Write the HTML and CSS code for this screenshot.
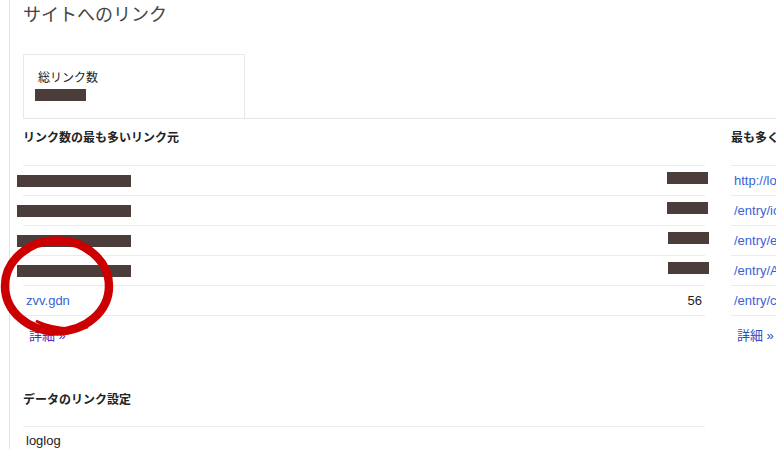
FILE: index.html
```html
<!DOCTYPE html>
<html lang="ja">
<head>
    <meta charset="UTF-8">
    <meta name="viewport" content="width=device-width, initial-scale=1.0">
    <title>サイトへのリンク</title>
    <link rel="stylesheet" href="styles.css">
</head>
<body>
    <div class="page">
        <h1 class="title">サイトへのリンク</h1>

        <div class="summary">
            <div class="stat-card">
                <div class="stat-label">総リンク数</div>
                <div class="stat-value"><span class="redact redact-total"></span></div>
            </div>
        </div>

        <div class="columns">
            <section class="panel panel-main">
                <h2 class="panel-title">リンク数の最も多いリンク元</h2>
                <div class="rows">
                    <div class="row">
                        <span class="redact redact-name"></span>
                        <span class="redact redact-count"></span>
                    </div>
                    <div class="row">
                        <span class="redact redact-name"></span>
                        <span class="redact redact-count"></span>
                    </div>
                    <div class="row">
                        <span class="redact redact-name"></span>
                        <span class="redact redact-count shift"></span>
                    </div>
                    <div class="row">
                        <span class="redact redact-name"></span>
                        <span class="redact redact-count shift"></span>
                    </div>
                    <div class="row">
                        <a href="#" class="row-link">zvv.gdn</a>
                        <span class="row-count">56</span>
                    </div>
                </div>
                <a href="#" class="more visited">詳細 &raquo;</a>

                <h2 class="panel-title sub">データのリンク設定</h2>
                <div class="rows plain">
                    <div class="row">loglog</div>
                </div>
            </section>

            <section class="panel panel-side">
                <h2 class="panel-title">最も多くリンクされているコンテンツ</h2>
                <div class="rows">
                    <div class="row"><a href="#" class="row-link">http://loglog.xsrv.jp/</a></div>
                    <div class="row"><a href="#" class="row-link">/entry/icon-font/</a></div>
                    <div class="row"><a href="#" class="row-link">/entry/excel-macro/</a></div>
                    <div class="row"><a href="#" class="row-link">/entry/AdSense/</a></div>
                    <div class="row"><a href="#" class="row-link">/entry/css-grid/</a></div>
                </div>
                <a href="#" class="more">詳細 &raquo;</a>
            </section>
        </div>
    </div>

    <!-- hand drawn marker over the zvv.gdn row -->
    <svg class="mark" width="122" height="115" viewBox="0 0 122 115">
        <ellipse cx="57" cy="58" rx="52" ry="45.5" fill="none" stroke="#cc0000" stroke-width="8.5"/>
        <path d="M36 93 Q58 108 88 99 Q60 104 36 93 Z" fill="#cc0000" stroke="#cc0000" stroke-width="2.5"/>
    </svg>
</body>
</html>
```

FILE: styles.css
```css
html, body {
    overflow: hidden;
}
body {
    margin: 0;
    font-family: "Liberation Sans", "Noto Sans CJK JP", sans-serif;
    font-size: 13px;
    color: #222;
    background: #fff;
    position: relative;
    height: 449px;
}
a {
    color: #3b5fd6;
    text-decoration: none;
}
.page {
    margin-left: 9px;
    border-left: 1px solid #e5e5e5;
    padding-left: 13px;
    height: 449px;
    width: 1200px;
}
.title {
    margin: 0 0 26px;
    padding-top: 2px;
    font-size: 18px;
    line-height: 26px;
    font-weight: normal;
    color: #444;
}
.summary {
    border-bottom: 1px solid #e5e5e5;
}
.stat-card {
    box-sizing: border-box;
    width: 222px;
    height: 64px;
    border: 1px solid #e8e8e8;
    border-bottom: none;
    padding: 15px 0 0 14px;
}
.stat-label {
    font-size: 12px;
    line-height: 16px;
    color: #222;
}
.stat-value {
    height: 16px;
    position: relative;
}
.redact {
    display: block;
    position: absolute;
    background: #4a3d3a;
    height: 12px;
}
.redact-total {
    left: -3px;
    top: 3px;
    width: 51px;
}
.columns {
    display: flex;
    gap: 26px;
}
.panel-main {
    width: 682px;
}
.panel-side {
    width: 320px;
}
.panel-title {
    margin: 11px 0 19px;
    font-size: 12px;
    line-height: 16px;
    font-weight: bold;
    color: #222;
    white-space: nowrap;
}
.panel-title.sub {
    margin: 48px 0 18px;
}
.rows {
    border-bottom: 1px solid #ebebeb;
}
.rows.plain {
    border-bottom: none;
}
.row {
    position: relative;
    box-sizing: border-box;
    height: 30px;
    border-top: 1px solid #ebebeb;
    display: flex;
    align-items: center;
    justify-content: space-between;
    padding: 0 3px;
    white-space: nowrap;
}
.rows.plain .row {
    height: 28px;
}
.row-count {
    color: #222;
}
.redact-name {
    left: -6px;
    top: 9px;
    width: 114px;
}
.redact-count {
    right: -3px;
    top: 6px;
    width: 41px;
}
.redact-count.shift {
    right: -4px;
}
.more {
    display: inline-block;
    margin: 12px 0 0 6px;
    line-height: 16px;
    font-size: 13px;
    color: #2a4fc4;
}
.more.visited {
    color: #5a2ab8;
}
.mark {
    position: absolute;
    left: 0;
    top: 228px;
}
```
